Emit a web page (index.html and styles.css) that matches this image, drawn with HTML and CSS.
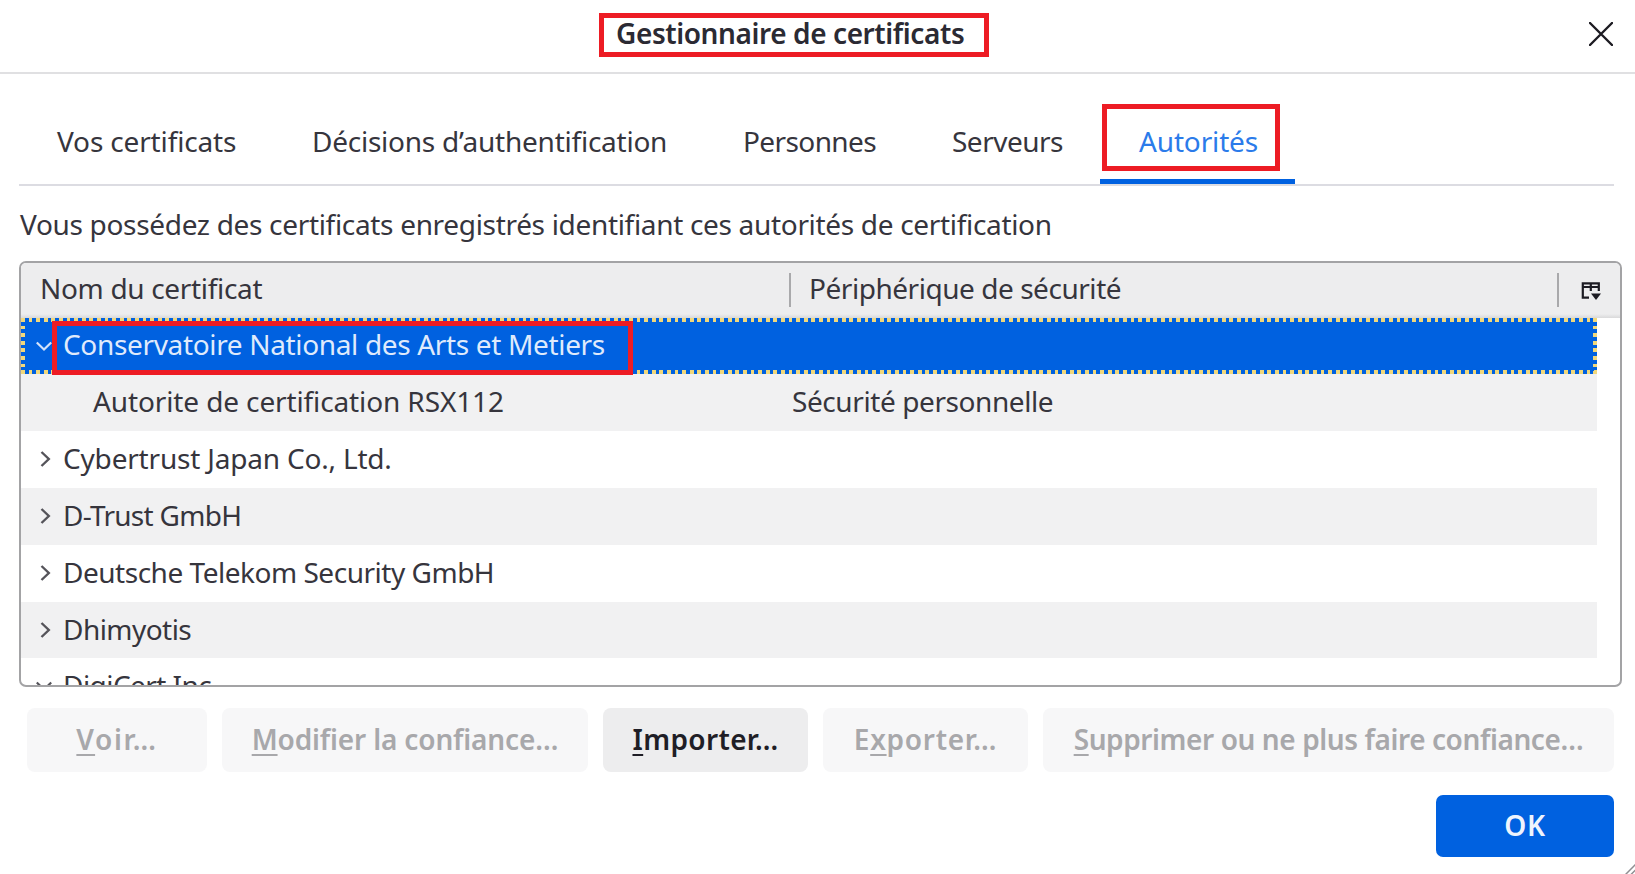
FILE: index.html
```html
<!DOCTYPE html>
<html lang="fr">
<head>
<meta charset="utf-8">
<title>Gestionnaire de certificats</title>
<link rel="stylesheet" href="styles.css">
</head>
<body>
<div class="dialog">
  <header class="titlebar">
    <h1 class="title"><span class="title-text">Gestionnaire de certificats</span></h1>
    <svg class="close" viewBox="0 0 24 24" width="24" height="24"><path d="M1 1L23 23M23 1L1 23" fill="none" stroke="#1c1b22" stroke-width="2.4" stroke-linecap="round"/></svg>
  </header>
  <main class="content">
    <nav class="tabs">
      <span class="tab tab-own">Vos certificats</span>
      <span class="tab tab-auth">Décisions d’authentification</span>
      <span class="tab tab-people">Personnes</span>
      <span class="tab tab-servers">Serveurs</span>
      <span class="tab tab-ca active">Autorités<i class="mark mark-tab"></i></span>
    </nav>
    <p class="desc">Vous possédez des certificats enregistrés identifiant ces autorités de certification</p>
    <section class="tree">
      <div class="cols">
        <div class="col col-name">Nom du certificat</div>
        <div class="col col-device">Périphérique de sécurité</div>
        <div class="picker">
          <svg viewBox="0 0 20 19" width="20" height="19"><path d="M8 15.6H1.8V1.3H17.8V9M1.8 5H17.8M9.8 1.3V9" fill="none" stroke="#1c1b22" stroke-width="2.2"/><path d="M10 11.5H20L15 18Z" fill="#1c1b22"/></svg>
        </div>
      </div>
      <div class="rows">
        <div class="row selected"><svg class="tw" viewBox="0 0 16 16"><path d="M0.8 4.5L8 11.5L15.2 4.5" fill="none" stroke="#d3e2fa" stroke-width="2.2"/></svg><span class="cell s-cnam">Conservatoire National des Arts et Metiers</span><i class="mark mark-row"></i></div>
        <div class="row child alt"><span class="cell s-rsx">Autorite de certification RSX112</span><span class="device">Sécurité personnelle</span></div>
        <div class="row"><svg class="tw" viewBox="0 0 16 16"><path d="M5.5 1L12.8 8L5.5 15" fill="none" stroke="#55545a" stroke-width="2.4"/></svg><span class="cell s-cyber">Cybertrust Japan Co., Ltd.</span></div>
        <div class="row alt"><svg class="tw" viewBox="0 0 16 16"><path d="M5.5 1L12.8 8L5.5 15" fill="none" stroke="#55545a" stroke-width="2.4"/></svg><span class="cell s-dtrust">D-Trust GmbH</span></div>
        <div class="row"><svg class="tw" viewBox="0 0 16 16"><path d="M5.5 1L12.8 8L5.5 15" fill="none" stroke="#55545a" stroke-width="2.4"/></svg><span class="cell s-telekom">Deutsche Telekom Security GmbH</span></div>
        <div class="row alt"><svg class="tw" viewBox="0 0 16 16"><path d="M5.5 1L12.8 8L5.5 15" fill="none" stroke="#55545a" stroke-width="2.4"/></svg><span class="cell s-dhi">Dhimyotis</span></div>
        <div class="row"><svg class="tw" viewBox="0 0 16 16"><path d="M0.8 4.5L8 11.5L15.2 4.5" fill="none" stroke="#55545a" stroke-width="2.2"/></svg><span class="cell s-digi">DigiCert Inc</span></div>
      </div>
    </section>
    <div class="actions">
      <button class="btn b-view" disabled><span><u>V</u>oir…</span></button>
      <button class="btn b-edit" disabled><span><u>M</u>odifier la confiance…</span></button>
      <button class="btn b-import"><span><u>I</u>mporter…</span></button>
      <button class="btn b-export" disabled><span>E<u>x</u>porter…</span></button>
      <button class="btn b-delete" disabled><span><u>S</u>upprimer ou ne plus faire confiance…</span></button>
    </div>
    <footer class="footer"><button class="btn ok">OK</button></footer>
  </main>
  <svg class="grip" viewBox="0 0 10 10" width="10" height="10"><path d="M0 11L11 0M5.5 11L11 5.5" fill="none" stroke="#8f8f93" stroke-width="1.5"/></svg>
</div>
</body>
</html>
```
FILE: styles.css
```css
* { box-sizing: border-box; }
body {
  margin: 0;
  background: #fff;
  color: #36353d;
  font: 28px/38px "Noto Sans", sans-serif;
  white-space: nowrap;
  overflow: hidden;
}
.dialog { position: relative; width: 1635px; height: 874px; display: flex; flex-direction: column; }

.titlebar {
  height: 74px;
  padding: 13px 22px 0 599px;
  border-bottom: 2px solid #e0e0e2;
  display: flex;
  justify-content: space-between;
  align-items: flex-start;
}
.title {
  margin: 0;
  width: 390px;
  height: 44px;
  border: 5px solid #ed1c24;
  padding-left: 12px;
  color: #2b2a33;
  font-size: 28px;
  font-weight: 600;
  line-height: 30px;
}
.title-text { letter-spacing: -0.41px; }
.close { margin-top: 9px; }

.content { padding: 0 13px 0 19px; display: flex; flex-direction: column; }

.tabs {
  display: flex;
  height: 112px;
  margin-right: 8px;
  border-bottom: 2px solid #dcdce2;
}
.tab { padding: 48px 0 0 38px; position: relative; }
.tab-own { width: 255px; letter-spacing: -0.15px; }
.tab-auth { width: 431px; letter-spacing: -0.24px; }
.tab-people { width: 209px; letter-spacing: -0.6px; }
.tab-servers { width: 186px; letter-spacing: -0.5px; }
.tab-ca { width: 195px; padding-left: 39px; letter-spacing: -0.15px; }
.tab.active { color: #2b7bea; border-bottom: 5px solid #0061e0; }

.mark { position: absolute; border: 5px solid #ed1c24; pointer-events: none; }
.mark-tab { left: 2px; top: 30px; width: 178px; height: 67px; }
.mark-row { left: 31px; top: 3px; width: 581px; height: 54px; z-index: 1; }

.desc { margin: 19px 0 18px 1px; letter-spacing: -0.32px; }

.tree {
  height: 426px;
  border: 2px solid #a3a3a5;
  border-radius: 7px;
  overflow: hidden;
}
.cols {
  display: flex;
  height: 55px;
  padding: 6px 0 0 19px;
  background: linear-gradient(#ededee 51px, #d9d9da 55px);
}
.col { height: 42px; }
.col-name { width: 749px; letter-spacing: -0.32px; }
.col-device {
  width: 768px;
  padding-left: 20px;
  letter-spacing: -0.46px;
}
.col-device, .picker {
  background: linear-gradient(#a9a9ab, #a9a9ab) 0 4px / 2px 34px no-repeat;
}
.picker { flex: 1; height: 42px; padding: 4px 0 0 24px; }
.picker svg { display: block; margin-top: 9px; }

.rows { margin-right: 23px; }
.row {
  position: relative;
  height: 56.9px;
  padding: 8px 0 0 14px;
  display: flex;
  align-items: flex-start;
}
.row.selected { height: 56px; padding-top: 7px; }
.row.alt { background: #f1f1f2; }
.row.child { padding-left: 72px; }
.tw { width: 16px; height: 16px; margin: 12px 11px 0 1px; flex: none; }
.selected .tw { margin-top: 13px; }
.child .cell { width: 699px; }
.selected {
  color: #dfeafc;
  background:
    repeating-linear-gradient(90deg, #f1d87c 0 3.8px, transparent 3.8px 7.6px) 0 0 / 100% 4px no-repeat,
    repeating-linear-gradient(90deg, #f1d87c 0 3.8px, transparent 3.8px 7.6px) 0 100% / 100% 4px no-repeat,
    repeating-linear-gradient(#f1d87c 0 3.8px, transparent 3.8px 7.6px) 0 0 / 4px 100% no-repeat,
    repeating-linear-gradient(#f1d87c 0 3.8px, transparent 3.8px 7.6px) 100% 0 / 4px 100% no-repeat,
    #0061e0;
}
.s-cnam { letter-spacing: -0.34px; }
.s-rsx { letter-spacing: -0.12px; }
.s-cyber { letter-spacing: -0.19px; }
.s-dtrust { letter-spacing: -0.7px; }
.s-telekom { letter-spacing: -0.48px; }
.s-dhi { letter-spacing: -0.55px; }
.s-digi { letter-spacing: -0.55px; }
.device { letter-spacing: -0.41px; }

.actions { display: flex; gap: 15px; margin: 21px 7px 0 8px; }
.btn {
  height: 64px;
  border: 0;
  border-radius: 8px;
  padding: 0 0 3px;
  background: #ededee;
  color: #1f1e26;
  font: 600 28px/38px "Noto Sans", sans-serif;
}
.btn:disabled { background: #f7f7f8; color: #a8a8ab; }
.btn u { text-decoration-thickness: 2px; text-underline-offset: 4px; text-decoration-skip-ink: none; }
.b-view { width: 180px; letter-spacing: 1.6px; }
.b-edit { width: 366px; letter-spacing: -0.15px; }
.b-import { width: 205px; letter-spacing: 0.35px; }
.b-export { width: 205px; letter-spacing: 0.7px; }
.b-delete { width: 571px; letter-spacing: -0.41px; }

.footer { display: flex; justify-content: flex-end; margin: 23px 8px 0 0; }
.ok { width: 178px; height: 62px; border-radius: 7px; background: #0061e0; color: #eef4fd; letter-spacing: 0.6px; }

.grip { position: absolute; right: 0; bottom: 0; }
```
